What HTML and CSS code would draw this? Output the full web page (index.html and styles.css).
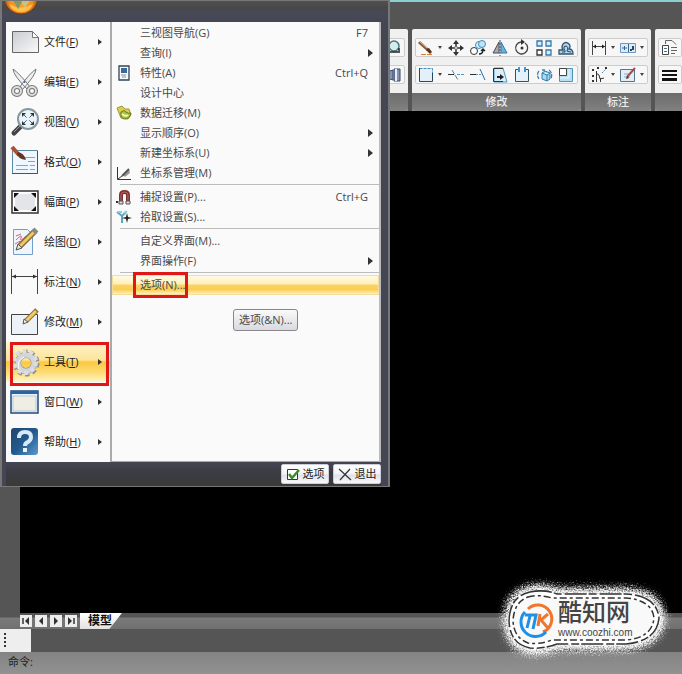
FILE: index.html
```html
<!DOCTYPE html>
<html lang="zh-CN">
<head>
<meta charset="utf-8">
<title>CAD</title>
<link rel="stylesheet" href="styles.css">
</head>
<body>
<div class="titlebar"></div>

<div class="ribbon">
  <section class="group group-first">
    <div class="tools">
      <div class="toolrow"><button class="tool" aria-label="查找"><svg width="20" height="18" viewBox="0 0 20 18"><circle cx="11" cy="7" r="5" fill="#d7ecec" stroke="#47777c" stroke-width="1.5"/><path d="M6 13h9M16 9v5" stroke="#222" stroke-width="1.5"/></svg></button></div>
      <div class="toolrow"><button class="tool" aria-label="图块"><svg width="20" height="18" viewBox="0 0 20 18"><path d="M4 6l6-2v10l-6-2zM11 3h6v12h-6z" fill="#8793ae" stroke="#36486a"/><path d="M13 3v12" stroke="#e8edf5" stroke-width="2"/></svg></button></div>
    </div>
    <h2 class="caption"></h2>
  </section>

  <section class="group">
    <div class="tools">
      <div class="toolrow">
        <button class="tool tool-lead" aria-label="删除"><svg width="18" height="18" viewBox="0 0 18 18"><path d="M2 3l9 8" stroke="#8a5535" stroke-width="3"/><path d="M2 2l8 7" stroke="#e9c7a2"/><path d="M9 11l3-2 3 4-2 2z" fill="#563322"/><path d="M4 15.500h12" stroke="#e07a2c" stroke-dasharray="5 1"/></svg></button>
        <button class="drop" aria-label="更多"></button>
        <button class="tool" aria-label="移动"><svg width="18" height="18" viewBox="0 0 18 18"><path d="M9 1l3 4H6zM9 17l3-4H6zM1 9l4-3v6zM17 9l-4-3v6z" fill="#333"/><path d="M9 4v3M9 11v3M4 9h3M11 9h3" stroke="#333" stroke-width="1.500"/><circle cx="9" cy="9" r="1.500" fill="none" stroke="#555"/></svg></button>
        <button class="tool" aria-label="复制"><svg width="18" height="18" viewBox="0 0 18 18"><circle cx="5" cy="12" r="3.500" fill="#fff" stroke="#333"/><circle cx="10" cy="6" r="3.500" fill="#d5effc" stroke="#3c91bd"/><circle cx="13" cy="5" r="3.500" fill="#bde3f7" stroke="#3c91bd"/><path d="M10 15q4 0 4-4m-2 1l2-2 2 2" fill="none" stroke="#222" stroke-width="1.400"/></svg></button>
        <button class="tool" aria-label="镜像"><svg width="18" height="18" viewBox="0 0 18 18"><path d="M8 3v11H2z" fill="#a7a9ad" stroke="#4a4e54"/><path d="M10 3v11h6z" fill="#6db3df" stroke="#3679aa"/><path d="M9 1v16" stroke="#334b5c" stroke-dasharray="2 1"/></svg></button>
        <button class="tool" aria-label="旋转"><svg width="18" height="18" viewBox="0 0 18 18"><path d="M8 3a6 6 0 1 0 4 1" fill="none" stroke="#444" stroke-width="1.300"/><path d="M8 0v6l4-3z" fill="#333"/><circle cx="9" cy="9" r="1.500" fill="#333"/></svg></button>
        <button class="tool" aria-label="阵列"><svg width="18" height="18" viewBox="0 0 18 18"><g fill="#d8effb" stroke="#3679aa" stroke-width="1.300"><path d="M2 2h5v5H2zM11 2h5v5h-5zM11 11h5v5h-5z"/><path d="M2 11h5v5H2z" fill="#fff" stroke="#333"/></g></svg></button>
        <button class="tool" aria-label="等距"><svg width="18" height="18" viewBox="0 0 18 18"><path d="M2 15v-4h4q-2-3 0-6 3-3 6 0 2 2 0 5 4 0 4 5z" fill="#acd8ef" stroke="#34556d" stroke-width="1.300"/><path d="M5 13h3q0-2-1-3-1-3 2-3 3 1 1 5 2 1 4 1" fill="none" stroke="#345"/></svg></button>
      </div>
      <div class="toolrow">
        <button class="tool tool-lead" aria-label="拉伸"><svg width="18" height="18" viewBox="0 0 18 18"><path d="M2.500 2.500h13v13h-13z" fill="#e3f0f8"/><path d="M2.500 2.500h13v5" fill="none" stroke="#3f8bbd" stroke-dasharray="3 1"/><path d="M2.500 2v13.500h13V7" fill="none" stroke="#29485f"/></svg></button>
        <button class="drop" aria-label="更多"></button>
        <button class="tool" aria-label="裁剪"><svg width="18" height="18" viewBox="0 0 18 18"><path d="M1 8.500h6" stroke="#333"/><path d="M10 8.500h7" stroke="#4d99c8" stroke-dasharray="3 1"/><path d="M5 4l6 10" stroke="#4d83a8" stroke-dasharray="5 1"/></svg></button>
        <button class="tool" aria-label="延伸"><svg width="18" height="18" viewBox="0 0 18 18"><path d="M1 8.500h6" stroke="#333"/><path d="M7 8.500h6" stroke="#4d99c8" stroke-dasharray="2 1"/><path d="M11 3l5 11" stroke="#376b90"/></svg></button>
        <button class="tool" aria-label="缩放"><svg width="18" height="18" viewBox="0 0 18 18"><path d="M3 2h9l4 14H3z" fill="#d8effb" stroke="#4c9ac5"/><path d="M12 2.500H2.500v13H12" fill="none" stroke="#333"/><path d="M6 11h4" stroke="#222" stroke-width="2"/><path d="M9 8l4 3-4 3z" fill="#222"/></svg></button>
        <button class="tool" aria-label="打断"><svg width="18" height="18" viewBox="0 0 18 18"><path d="M5 3.500H2.500v12h13v-12H13" fill="#e2f1fa" stroke="#345268"/><path d="M6 1v5M12 1v5" stroke="#4297ce" stroke-width="2"/></svg></button>
        <button class="tool" aria-label="三维"><svg width="18" height="18" viewBox="0 0 18 18"><path d="M7 7l3-2 5 2v6l-3 2-5-2zM7 7l5 2 3-2M12 9v6" fill="#a7daf5" stroke="#307ba9"/><path d="M4 5q-3 3 0 8M14 4q4 3 2 9M7 4h3" fill="none" stroke="#407fa5" stroke-width="1.300" stroke-dasharray="4 1"/></svg></button>
        <button class="tool" aria-label="比例"><svg width="18" height="18" viewBox="0 0 18 18"><path d="M2.500 2.500h13v13h-13z" fill="#b9dff2" stroke="#4f93bb"/><path d="M2.500 2.500h7v7h-7z" fill="#fff" stroke="#444"/><path d="M12 3v9H3" fill="none" stroke="#e9f7ff"/></svg></button>
      </div>
    </div>
    <h2 class="caption">修改</h2>
  </section>

  <section class="group">
    <div class="tools">
      <div class="toolrow">
        <button class="tool tool-lead" aria-label="尺寸标注"><svg width="18" height="18" viewBox="0 0 18 18"><path d="M2.500 2v14M15.500 2v14M3 7.500h12" stroke="#444"/><path d="M3 7.500l3-2v4zM15 7.500l-3-2v4z" fill="#222"/></svg></button>
        <button class="drop" aria-label="更多"></button>
        <button class="tool tool-lead" aria-label="公差"><svg width="18" height="18" viewBox="0 0 18 18"><path d="M1.500 4.500h15v9h-15z" fill="#dceaf6" stroke="#6f98c0"/><path d="M3 9h5M5.500 7v4M9.500 5v8" stroke="#386790"/><path d="M11 11h2M14 7v4" stroke="#27496a" stroke-width="2"/></svg></button>
        <button class="drop" aria-label="更多"></button>
      </div>
      <div class="toolrow">
        <button class="tool tool-lead" aria-label="坐标标注"><svg width="18" height="18" viewBox="0 0 18 18"><path d="M6.500 5v11M6 7l3 2 1 4 4-1M10.500 12v4" fill="none" stroke="#333"/><path d="M2 4h2M2 10h2M2 15h2M7 2h2M15 2h2" stroke="#333" stroke-width="2"/><path d="M12 7l4-4" stroke="#468ab6" stroke-dasharray="2 1"/></svg></button>
        <button class="drop" aria-label="更多"></button>
        <button class="tool tool-lead" aria-label="标注编辑"><svg width="18" height="18" viewBox="0 0 18 18"><path d="M1.500 3.500h14v12h-14z" fill="#e1eef6" stroke="#56758c"/><path d="M5 8h5M5 11h6" stroke="#8ab0ca"/><path d="M8 11l8-9" stroke="#a44c4c" stroke-width="2"/><path d="M7 13l1-3 2 2z" fill="#333"/></svg></button>
        <button class="drop" aria-label="更多"></button>
      </div>
    </div>
    <h2 class="caption">标注</h2>
  </section>

  <section class="group group-last">
    <div class="tools">
      <div class="toolrow"><button class="tool" aria-label="图层"><svg width="18" height="18" viewBox="0 0 18 18"><path d="M1.500 6.500h6v9h-6z" fill="#fff" stroke="#444"/><path d="M3 9.500h3M3 12.500h3" stroke="#478"/><path d="M4.500 5V1.500H11l4 4M10 8.500h6M10 11.500h6M10 14.500h4" fill="none" stroke="#666"/></svg></button></div>
      <div class="toolrow"><button class="tool" aria-label="线宽"><svg width="18" height="18" viewBox="0 0 18 18"><path d="M1 5h15M1 9h15" stroke="#111" stroke-width="2"/><path d="M1 13.500h15" stroke="#111" stroke-width="3"/></svg></button></div>
    </div>
    <h2 class="caption"></h2>
  </section>
</div>

<main class="workspace"><div class="canvas"></div></main>

<div class="sheets">
  <button class="nav" aria-label="第一页"><svg width="12" height="12" viewBox="0 0 12 12"><path d="M3 3v6" stroke="#333" stroke-width="1.500"/><path d="M9 2v8L5 6z" fill="#333"/></svg></button>
  <button class="nav" aria-label="上一页"><svg width="12" height="12" viewBox="0 0 12 12"><path d="M8 2v8L4 6z" fill="#333"/></svg></button>
  <button class="nav" aria-label="下一页"><svg width="12" height="12" viewBox="0 0 12 12"><path d="M4 2v8l4-4z" fill="#333"/></svg></button>
  <button class="nav" aria-label="最后一页"><svg width="12" height="12" viewBox="0 0 12 12"><path d="M9 3v6" stroke="#333" stroke-width="1.500"/><path d="M3 2v8l4-4z" fill="#333"/></svg></button>
  <button class="sheet">模型</button>
</div>
<div class="dock"><div class="grip"><i></i><i></i><i></i><i></i></div></div>
<footer class="command">命令:</footer>

<div class="appmenu">
  <div class="menuhead">
    <svg class="orb" width="36" height="36" viewBox="0 0 36 36"><defs><radialGradient id="orb" cx="50%" cy="60%" r="50%"><stop offset="0" stop-color="#ffb23c"/><stop offset=".7" stop-color="#f28a1c"/><stop offset="1" stop-color="#a34d12"/></radialGradient></defs><circle cx="18" cy="18" r="17" fill="url(#orb)" stroke="#613c27"/><path d="M6 25a13 13 0 0 0 24 0q-12 7-24 0z" fill="#ffc04a"/><path d="M9 16l6 10 4-7" fill="none" stroke="#7f9a62" stroke-width="4"/><path d="M18 18l4 8 6-9" fill="none" stroke="#c7c287" stroke-width="3"/></svg>
  </div>
  <div class="menubody">
    <nav class="primary">
      <a class="entry" href="#"><svg width="30" height="32" viewBox="0 0 30 32"><defs><linearGradient id="paper" x2="1" y2="1"><stop offset="0" stop-color="#c8cbd0"/><stop offset="1" stop-color="#fafafa"/></linearGradient></defs><path d="M2.500 5.500h20l6 6v15h-26z" fill="url(#paper)" stroke="#666"/><path d="M22.500 5.500v6h6z" fill="#fff" stroke="#777"/></svg><span>文件(<u>F</u>)</span><b class="caret"></b></a>
      <a class="entry" href="#"><svg width="30" height="32" viewBox="0 0 30 32"><path d="M3 3q0 6 15 21l3-2Q10 8 3 3zM26 3q0 6-14 21l-3-2Q19 8 26 3z" fill="#eee" stroke="#777"/><g fill="none" stroke="#777" stroke-width="4"><circle cx="7" cy="25" r="4"/><circle cx="22" cy="25" r="4"/></g><g fill="none" stroke="#ddd" stroke-width="2"><circle cx="7" cy="25" r="4"/><circle cx="22" cy="25" r="4"/></g><circle cx="14.500" cy="16" r="1" fill="#345f99"/></svg><span>编辑(<u>E</u>)</span><b class="caret"></b></a>
      <a class="entry" href="#"><svg width="30" height="32" viewBox="0 0 30 32"><path d="M4 27l8-8" stroke="#444" stroke-width="5" stroke-linecap="round"/><path d="M4 26l7-7" stroke="#999"/><circle cx="18" cy="13" r="10" fill="#e8f4fa" stroke="#8798a0" stroke-width="2"/><path d="M13 8l10 10M23 8L13 18" stroke="#557" stroke-dasharray="5 4"/><path d="M12 7h4l-4 4zM24 7h-4l4 4zM12 19h4l-4-4zM24 19h-4l4-4z" fill="#333"/></svg><span>视图(<u>V</u>)</span><b class="caret"></b></a>
      <a class="entry" href="#"><svg width="30" height="32" viewBox="0 0 30 32"><path d="M2.500 4.500h25v23h-25z" fill="#eef7fd" stroke="#5d87a3"/><path d="M27.500 5v22.500H2" fill="none" stroke="#456"/><path d="M13 11.500h12M18 15.500h7M6 19.500h19M6 23.500h19" stroke="#7ea7c4" stroke-dasharray="12 2"/><path d="M2 1l7 8" stroke="#af5131" stroke-width="4"/><path d="M8 6q6 1 8 8-8-1-9-6z" fill="#5e3426"/></svg><span>格式(<u>O</u>)</span><b class="caret"></b></a>
      <a class="entry" href="#"><svg width="30" height="32" viewBox="0 0 30 32"><path d="M2 5h26v22H2z" fill="#fff" stroke="#333" stroke-width="1.500"/><path d="M5 8h20v16H5z" fill="#e3e5e8"/><path d="M4 7h5l-5 5zM26 7h-5l5 5zM4 25h5l-5-5zM26 25h-5l5-5z" fill="#111"/></svg><span>幅面(<u>P</u>)</span><b class="caret"></b></a>
      <a class="entry" href="#"><svg width="30" height="32" viewBox="0 0 30 32"><path d="M3.500 3.500h14l5 5v20h-19z" fill="#edf6fd" stroke="#769cc8"/><path d="M6 14q7-7 5-2t5-2M5 18q8-5 5-1M6 10l5-2" fill="none" stroke="#d2627a"/><path d="M10 20L25 5" stroke="#8c6b34" stroke-width="6"/><path d="M10 20L24 6" stroke="#edc966" stroke-width="3"/><path d="M6 24l2-6 4 4z" fill="#eee0c4" stroke="#555"/><path d="M23 3l4 4" stroke="#888" stroke-width="4"/></svg><span>绘图(<u>D</u>)</span><b class="caret"></b></a>
      <a class="entry" href="#"><svg width="30" height="32" viewBox="0 0 30 32"><path d="M1.500 3v25M27.500 3v25M2 10.500h26" stroke="#444"/><path d="M2 10.500l4-2v4zM27 10.500l-4-2v4z" fill="#333"/></svg><span>标注(<u>N</u>)</span><b class="caret"></b></a>
      <a class="entry" href="#"><svg width="30" height="32" viewBox="0 0 30 32"><path d="M1.500 8.500h26v20h-26z" fill="#edf1f8" stroke="#444"/><path d="M16 15L27 4" stroke="#8c6b34" stroke-width="5"/><path d="M16 15L26 5" stroke="#f0ce64" stroke-width="3"/><path d="M13 18l1-5 4 3z" fill="#eee" stroke="#555"/></svg><span>修改(<u>M</u>)</span><b class="caret"></b></a>
      <a class="entry entry-active" href="#"><svg width="30" height="32" viewBox="0 0 30 32"><circle cx="16" cy="17" r="11" fill="none" stroke="#8d8f92" stroke-width="5" stroke-dasharray="4 3"/><circle cx="16" cy="17" r="8" fill="none" stroke="#8d8f92" stroke-width="6"/><circle cx="16" cy="17" r="8" fill="none" stroke="#d3d5d8" stroke-width="5"/><circle cx="15" cy="16" r="11" fill="none" stroke="#dcdee0" stroke-width="4" stroke-dasharray="4 3"/><path d="M9 23q-3-8 5-12" fill="none" stroke="#fff"/></svg><span>工具(<u>T</u>)</span><b class="caret"></b></a>
      <a class="entry" href="#"><svg width="30" height="32" viewBox="0 0 30 32"><path d="M1 5h27v22H1z" fill="#e9f3fd" stroke="#234b79" stroke-width="1.500"/><path d="M1 5h27v3H1z" fill="#2864aa"/><path d="M3 10h23v15H3z" fill="#eeeee3" stroke="#b5c8da"/></svg><span>窗口(<u>W</u>)</span><b class="caret"></b></a>
      <a class="entry" href="#"><svg width="30" height="32" viewBox="0 0 30 32"><defs><linearGradient id="help" x2="1" y2="1"><stop offset="0" stop-color="#22466e"/><stop offset=".5" stop-color="#23598d"/><stop offset="1" stop-color="#5e9bd0"/></linearGradient></defs><rect x="1" y="2" width="27" height="27" rx="3" fill="url(#help)"/><path d="M9 12q0-6 6-6 6 0 6 5 0 3-3 5-3 1-3 4" fill="none" stroke="#d5e9f7" stroke-width="4"/><path d="M13 22h4v4h-4z" fill="#e8f4fb"/></svg><span>帮助(<u>H</u>)</span><b class="caret"></b></a>
    </nav>
    <div class="submenu">
      <a class="item" href="#"><span class="name">三视图导航(G)</span><kbd>F7</kbd></a>
      <a class="item" href="#"><span class="name">查询(I)</span><b class="more"></b></a>
      <a class="item" href="#"><svg width="16" height="16" viewBox="0 0 16 16"><path d="M3 1h10v14H3z" fill="#f3f8fc" stroke="#345" stroke-width="1.300"/><path d="M5 3h6v5H5z" fill="#396a9b"/><path d="M5 10h5M6 12h4" stroke="#7b91a6"/></svg><span class="name">特性(A)</span><kbd>Ctrl+Q</kbd></a>
      <a class="item" href="#"><span class="name">设计中心</span></a>
      <a class="item" href="#"><svg width="16" height="16" viewBox="0 0 16 16"><path d="M1 3l5-2 3 3 4 0 2 6-3 4-7-1z" fill="#dece50" stroke="#9d973a"/><path d="M5 7q3-3 5 0 2 2 5 1-1 6-7 6-4-2-3-7z" fill="#a5c447" stroke="#5c7b25"/><path d="M6 9q3 3 6 1" fill="none" stroke="#fff3a5" stroke-width="2"/></svg><span class="name">数据迁移(M)</span></a>
      <a class="item" href="#"><span class="name">显示顺序(O)</span><b class="more"></b></a>
      <a class="item" href="#"><span class="name">新建坐标系(U)</span><b class="more"></b></a>
      <a class="item" href="#"><svg width="16" height="16" viewBox="0 0 16 16"><path d="M1.500 2v12.500H15M2 14l4-3" fill="none" stroke="#333"/><path d="M7 10l6-6 1 4-5 4z" fill="#999"/><path d="M6 11l7-7" stroke="#555" stroke-width="2"/></svg><span class="name">坐标系管理(M)</span></a>
      <hr>
      <a class="item" href="#"><svg width="16" height="16" viewBox="0 0 16 16"><path d="M5 14V6q0-3 3.500-3T12 6v8" fill="none" stroke="#7e3030" stroke-width="4"/><path d="M5 13V6q0-3 3.500-3T12 6v7" fill="none" stroke="#b66a68"/><path d="M3 12h4v3H3zM10 12h4v3h-4z" fill="#ddd" stroke="#555"/><path d="M0 12h2v2H0z" fill="#333"/></svg><span class="name">捕捉设置(P)...</span><kbd>Ctrl+G</kbd></a>
      <a class="item" href="#"><svg width="16" height="16" viewBox="0 0 16 16"><path d="M1 3l5 4 4-4M6 7v7" fill="none" stroke="#5aa9c2" stroke-width="2"/><path d="M2 3h4M8 4l3-2" stroke="#95ccd9" stroke-width="2"/><path d="M11 4l1 4 4 1-4 1-1 4-1-4-4-1 4-1z" fill="#222"/></svg><span class="name">拾取设置(S)...</span></a>
      <hr>
      <a class="item" href="#"><span class="name">自定义界面(M)...</span></a>
      <a class="item" href="#"><span class="name">界面操作(F)</span><b class="more"></b></a>
      <hr>
      <a class="item item-active" href="#"><span class="name">选项(N)...</span></a>
      <div class="tip" role="tooltip">选项(&amp;N)...</div>
    </div>
  </div>
  <div class="menufoot">
    <button class="footbtn"><svg width="14" height="14" viewBox="0 0 14 14"><path d="M1.500 2.500h10v10h-10z" fill="#fff" stroke="#333"/><path d="M3 7l3 4 7-8" fill="none" stroke="#3d8b2d" stroke-width="2.500"/></svg>选项</button>
    <button class="footbtn"><svg width="14" height="14" viewBox="0 0 14 14"><path d="M1 2l12 11M12 2L2 13" stroke="#333" stroke-width="1.200"/></svg>退出</button>
  </div>
</div>

<div class="brand">
  <svg class="halo" width="180" height="90" viewBox="0 0 180 90">
    <defs>
      <filter id="grain" x="-10%" y="-20%" width="120%" height="140%"><feGaussianBlur stdDeviation="3" result="b"/><feTurbulence type="fractalNoise" baseFrequency=".7" numOctaves="2" seed="4" result="n"/><feDisplacementMap in="b" in2="n" scale="14" xChannelSelector="R" yChannelSelector="G"/></filter>
    </defs>
    <path d="M38 14Q52 11 65 16H134Q168 18 170 43 168 69 134 72H65Q52 77 38 76 16 72 15 46 16 18 38 14z" fill="#fff" stroke="#fff" stroke-width="6" filter="url(#grain)"/>
    <path d="M38 17Q52 14 65 19H134Q165 21 167 43 165 66 134 69H65Q52 74 38 73 18 69 17 46 18 21 38 17z" fill="#fff" stroke="#333" stroke-width="1.500" stroke-dasharray="22 2 8 3"/>
    <path d="M36 22Q46 19 60 23H134Q160 25 162 43 160 63 134 65H60Q46 70 36 68 22 63 21 46 22 27 36 22z" fill="#f9f9f9" stroke="#333" stroke-width="1.500" stroke-dasharray="7 3 3 3"/>
    <g fill="none" stroke-width="3"><path d="M36 34A14 14 0 1 1 51 57" stroke="#ee762e"/><path d="M33 37A14 14 0 0 0 54 57" stroke="#2190e4"/><path d="M33 40h11l-3 14M38 41l-3 12" stroke="#2190e4"/><path d="M48 39l-2 12M56 39l-7 6 6 7h3" stroke="#ee762e"/></g>
  </svg>
  <div class="brandtext"><strong>酷知网</strong><span>www.coozhi.com</span></div>
</div>
</body>
</html>
```
FILE: styles.css
```css
* { box-sizing: border-box; }

body {
  margin: 0;
  min-height: 100vh;
  display: flex;
  flex-direction: column;
  position: relative;
  overflow: hidden;
  background: #555;
  color: #222;
  font: 11px/16px "Open Sans", "Noto Sans CJK SC", sans-serif;
}

button {
  padding: 0;
  border: 0;
  background: none;
  font: inherit;
  color: inherit;
}

a { color: inherit; text-decoration: none; }
svg { display: block; flex: none; }

/* Ribbon */
.titlebar {
  height: 29px;
  border-top: 2px solid #8bd0d1;
  background: #555;
}

.ribbon {
  display: flex;
  gap: 4px;
  overflow: hidden;
}

.group {
  flex: none;
  border-radius: 2px;
  overflow: hidden;
  background: #f0f0f0;
}

.group-first {
  width: 408px;
}

.group-first .tools { align-items: flex-end; }
.group-last { flex: 1 0 auto; }

.tools {
  display: flex;
  flex-direction: column;
  gap: 8px;
  padding: 9px 3px;
}

.toolrow {
  display: flex;
  height: 19px;
  border: 1px solid #ccc;
  border-radius: 2px;
  background: #f7f7f7;
}

.tool {
  width: 22px;
  display: flex;
  align-items: center;
  justify-content: center;
}

.tool-lead { width: 19px; }

.drop {
  width: 10px;
  display: flex;
  align-items: center;
  justify-content: center;
}

.drop::before {
  content: "";
  border: 2px solid transparent;
  border-top: 3px solid #444;
  border-bottom: 0;
}

.caption {
  margin: 0;
  height: 18px;
  background: linear-gradient(#6c6c6c, #818181);
  color: #eee;
  font-size: 11px;
  font-weight: 500;
  line-height: 17px;
  text-align: center;
}

/* Drawing area */
.workspace {
  flex: 1;
  display: flex;
  padding-left: 20px;
}

.canvas { flex: 1; background: #000; }

.sheets {
  display: flex;
  align-items: center;
  gap: 3px;
  height: 16px;
  padding-left: 20px;
  background: linear-gradient(#555 4px, #7a7a7a 5px, #707070);
}

.nav {
  width: 12px;
  height: 12px;
  background: #eee;
}

.sheet {
  width: 42px;
  height: 16px;
  padding-right: 2px;
  background: linear-gradient(#fff, #e2e2e2);
  clip-path: polygon(0 0, 100% 0, 70% 100%, 0 100%);
  color: #111;
  font-size: 12px;
  font-weight: 700;
  line-height: 16px;
}

.dock { height: 23px; display: flex; }

.grip {
  width: 31px;
  padding: 4px;
  display: flex;
  flex-direction: column;
  gap: 2px;
  background: #eee;
}

.grip i {
  width: 2px;
  height: 2px;
  background: #333;
}

.command {
  height: 22px;
  padding: 0 8px;
  background: linear-gradient(#838383, #929292);
  color: #222;
  line-height: 20px;
}

/* Application menu */
.appmenu {
  position: absolute;
  top: 0;
  left: 0;
  width: 390px;
  padding: 0 7px 0 4px;
  border: 1px solid #777;
  border-width: 1px 2px 1px;
  background: #444653;
  overflow: hidden;
}

.menuhead {
  height: 21px;
  margin: 0 -7px 0 -4px;
  background: linear-gradient(#505050, #484848 7px, #474957 12px, #444653);
}

.orb {
  position: absolute;
  top: -22px;
  left: 1px;
}

.menubody {
  display: flex;
  border-right: 2px solid #bbb;
  background: #fafafa;
}

.primary {
  width: 106px;
  border-right: 2px solid #aaa;
}

.entry {
  height: 40px;
  display: flex;
  align-items: center;
  gap: 4px;
  padding: 0 8px 0 4px;
}

.caret,
.more {
  margin-left: auto;
  border: 3px solid transparent;
  border-left: 4px solid #333;
  border-right: 0;
}

.more {
  margin-right: 2px;
  border-width: 4px;
  border-left-width: 5px;
  border-right: 0;
}

.entry-active {
  position: relative;
  background: linear-gradient(#fff3cd, #fde49a 45%, #fac841 50%, #fddb73 75%, #fff4c8);
}

/* Marker frames drawn over the highlighted commands */
.entry-active::after,
.item-active .name::after {
  content: "";
  position: absolute;
  border: 3px solid #df1717;
}

.entry-active::after { inset: 0 1px -4px 4px; }

.submenu {
  flex: 1;
  position: relative;
  padding-top: 1px;
  border-bottom: 1px solid #aaa;
  color: #484848;
}

.item {
  height: 20px;
  display: flex;
  align-items: center;
  gap: 8px;
  padding: 0 4px;
}

.name:first-child { margin-left: 24px; }

.item kbd {
  margin: 0 7px 0 auto;
  font: inherit;
}

.submenu hr {
  height: 1px;
  margin: 1px 0 2px 8px;
  border: 0;
  background: #bbb;
}

.item-active {
  border: 1px solid #f5dda0;
  padding: 0 3px;
  background: linear-gradient(#fffbe5, #ffefb6 45%, #fbd268 50%, #fbce50 75%, #fff0bd);
}

.item-active .name { position: relative; }
.item-active .name::after { inset: -5px -3px -5px -7px; }

.tip {
  position: absolute;
  top: 287px;
  left: 121px;
  padding: 2px 5px;
  border: 1px solid #888;
  border-radius: 3px;
  background: linear-gradient(#fafafa, #d9d9df);
  white-space: nowrap;
}

.menufoot {
  display: flex;
  justify-content: flex-end;
  gap: 4px;
  height: 24px;
  padding: 2px 0;
  background: linear-gradient(#444653, #3b3c43 10px, #3a3a3a);
}

.footbtn {
  width: 48px;
  display: flex;
  align-items: center;
  justify-content: center;
  gap: 3px;
  border: 1px solid #ccd;
  border-radius: 2px;
  background: linear-gradient(#fff, #f2f3f7 50%, #dfe2ea 55%, #f8f8fa);
}

/* Site badge */
.brand {
  position: absolute;
  right: 10px;
  bottom: 9px;
  width: 180px;
  height: 90px;
  padding: 24px 0 0 66px;
  font-family: "Liberation Sans", "Noto Sans CJK SC", sans-serif;
}

.halo { position: absolute; inset: 0; overflow: visible; }

.brandtext {
  position: relative;
  display: flex;
  flex-direction: column;
  color: #444;
}

.brandtext strong {
  font-size: 24px;
  font-weight: 500;
  line-height: 28px;
}

.brandtext span {
  font-size: 10px;
  line-height: 12px;
}
```
